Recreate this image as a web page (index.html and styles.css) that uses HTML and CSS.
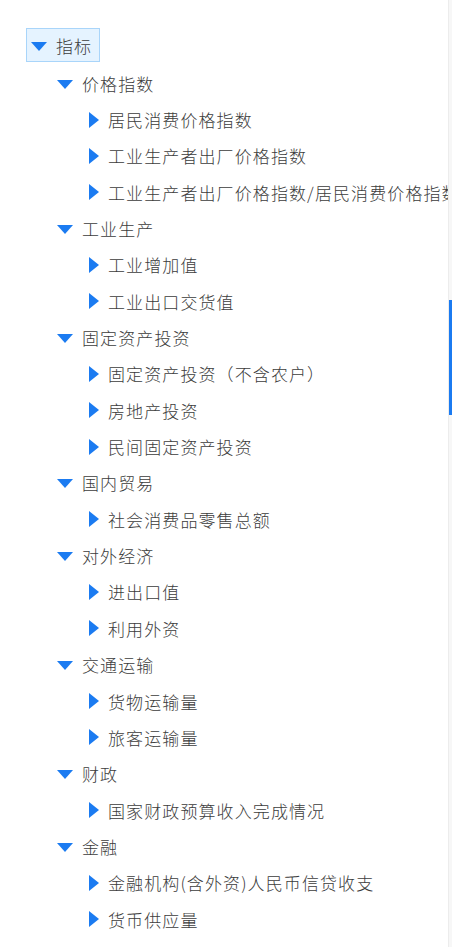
FILE: index.html
```html
<!DOCTYPE html>
<html lang="zh-CN">
<head>
    <meta charset="UTF-8">
    <meta name="viewport" content="width=device-width, initial-scale=1.0">
    <title>指标</title>
    <link rel="stylesheet" href="styles.css">
</head>
<body>
    <div class="page">
        <div class="tree">
            <div class="node root">
                <div class="label selected"><span class="arrow down"></span>指标</div>
            </div>
            <div class="children">
                <div class="node lv1"><span class="arrow down"></span>价格指数</div>
                <div class="node lv2"><span class="arrow right"></span>居民消费价格指数</div>
                <div class="node lv2"><span class="arrow right"></span>工业生产者出厂价格指数</div>
                <div class="node lv2"><span class="arrow right"></span>工业生产者出厂价格指数/居民消费价格指数</div>

                <div class="node lv1"><span class="arrow down"></span>工业生产</div>
                <div class="node lv2"><span class="arrow right"></span>工业增加值</div>
                <div class="node lv2"><span class="arrow right"></span>工业出口交货值</div>

                <div class="node lv1"><span class="arrow down"></span>固定资产投资</div>
                <div class="node lv2"><span class="arrow right"></span>固定资产投资（不含农户）</div>
                <div class="node lv2"><span class="arrow right"></span>房地产投资</div>
                <div class="node lv2"><span class="arrow right"></span>民间固定资产投资</div>

                <div class="node lv1"><span class="arrow down"></span>国内贸易</div>
                <div class="node lv2"><span class="arrow right"></span>社会消费品零售总额</div>

                <div class="node lv1"><span class="arrow down"></span>对外经济</div>
                <div class="node lv2"><span class="arrow right"></span>进出口值</div>
                <div class="node lv2"><span class="arrow right"></span>利用外资</div>

                <div class="node lv1"><span class="arrow down"></span>交通运输</div>
                <div class="node lv2"><span class="arrow right"></span>货物运输量</div>
                <div class="node lv2"><span class="arrow right"></span>旅客运输量</div>

                <div class="node lv1"><span class="arrow down"></span>财政</div>
                <div class="node lv2"><span class="arrow right"></span>国家财政预算收入完成情况</div>

                <div class="node lv1"><span class="arrow down"></span>金融</div>
                <div class="node lv2"><span class="arrow right"></span>金融机构(含外资)人民币信贷收支</div>
                <div class="node lv2"><span class="arrow right"></span>货币供应量</div>
            </div>
        </div>
        <div class="scrollbar">
            <div class="thumb"></div>
        </div>
    </div>
</body>
</html>
```

FILE: styles.css
```css
body {
    margin: 0;
    padding: 0;
    background-color: white;
    font-family: "Noto Sans CJK SC", "Noto Sans", sans-serif;
    color: #3c3c3c;
}
.page {
    display: flex;
    height: 947px;
    overflow: hidden;
}
.tree {
    flex: 1;
    min-width: 0;
    overflow: hidden;
    white-space: nowrap;
    padding-top: 28px;
    border-right: 1px solid #ececec;
    font-size: 17px;
    font-weight: 300;
    letter-spacing: 1.1px;
}
.scrollbar {
    width: 3px;
    background-color: #f7f7f7;
}
.thumb {
    margin-top: 300px;
    height: 115px;
    background-color: #1b7bf1;
}

.root {
    padding-left: 26px;
}
.label {
    display: inline-flex;
    align-items: center;
    height: 32px;
    padding: 0 7px 0 4px;
}
.selected {
    background-color: #e5f3ff;
    border: 1px solid #a9d5fa;
}
.children {
    padding-top: 3px;
}
.node {
    display: flex;
    align-items: center;
}
.children .node {
    height: 36.35px;
}
.lv1 {
    padding-left: 57px;
}
.lv2 {
    padding-left: 89px;
}

.arrow {
    display: inline-block;
    width: 0;
    height: 0;
    flex-shrink: 0;
}
.arrow.down {
    border-left: 8px solid transparent;
    border-right: 8px solid transparent;
    border-top: 9px solid #1b7bf1;
    margin-right: 9px;
    margin-top: 2px;
}
.arrow.right {
    border-top: 8px solid transparent;
    border-bottom: 8px solid transparent;
    border-left: 10px solid #1b7bf1;
    margin-right: 9px;
}
```
